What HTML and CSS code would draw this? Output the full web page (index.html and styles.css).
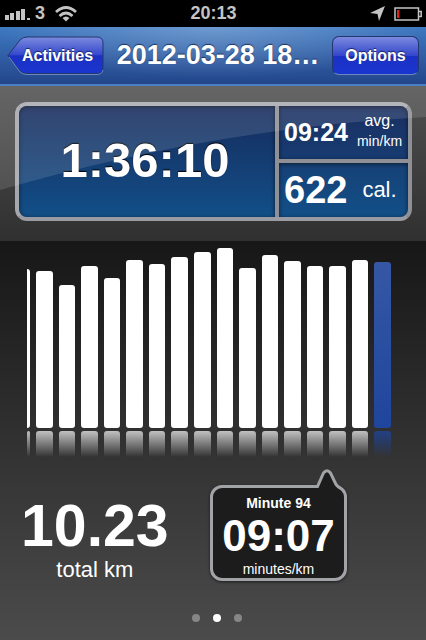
FILE: index.html
```
<!DOCTYPE html>
<html lang="en">

<head>
    <meta charset="UTF-8">
    <meta name="viewport" content="width=device-width, initial-scale=1.0">
    <title>Activity</title>
    <link rel="stylesheet" href="styles.css">
</head>

<body>
    <div class="status-bar">
        <div class="carrier">
            <svg width="25" height="12" viewBox="0 0 25 12" fill="#c4c4c4">
                <rect x="0" y="7" width="4" height="5" />
                <rect x="5" y="5" width="4" height="7" />
                <rect x="11" y="3" width="4" height="9" />
                <rect x="16" y="1" width="4" height="11" />
                <rect x="22" y="10" width="3" height="2" />
            </svg>
            <span>3</span>
            <svg class="wifi" width="22" height="16" viewBox="0 0 22 16" fill="none" stroke="#c4c4c4" stroke-width="2.8">
                <path d="M1 6 Q11 -3 21 6" />
                <path d="M4.500 10 Q11 4 17.500 10" />
                <path d="M11 15.500 L7.500 12 Q11 9 14.500 12 Z" fill="#c4c4c4" stroke="none" />
            </svg>
        </div>
        <span class="clock">20:13</span>
        <div class="indicators">
            <svg width="15" height="15" viewBox="0 0 15 15" fill="#c4c4c4">
                <path d="M15 0 L9 15 L7.500 8 L0 7 Z" />
            </svg>
            <svg width="28" height="14" viewBox="0 0 28 14" fill="none" stroke="#c4c4c4" stroke-width="1.500">
                <rect x="1" y="1" width="23.500" height="12" />
                <path d="M25 4.500 H27.200 V9.500 H25" />
                <rect x="3" y="3" width="2.500" height="8" fill="#d8261c" stroke="none" />
            </svg>
        </div>
    </div>

    <header class="nav-bar">
        <button class="back-btn" type="button">
            <svg viewBox="0 0 97 39" preserveAspectRatio="none">
                <defs>
                    <linearGradient id="backFill" x1="0" y1="0" x2="0" y2="1">
                        <stop offset="0" stop-color="#7b8ade" />
                        <stop offset="0.5" stop-color="#3447cc" />
                        <stop offset="0.51" stop-color="#1c31c4" />
                        <stop offset="1" stop-color="#1a35cf" />
                    </linearGradient>
                </defs>
                <path d="M1 19.500 L13 4 Q16 1 20 1 H90 Q96 1 96 7 V31 Q96 37.500 90 37.500 H20 Q16 37.500 13 35 Z" fill="url(#backFill)" stroke="#24366f" />
                <path d="M2 21 L13 36 Q16 38.500 20 38.500 H90 Q95 38.500 96 34" fill="none" stroke="#6c87bd" />
            </svg>
            <span>Activities</span>
        </button>
        <h1 class="title">2012-03-28 18…</h1>
        <button class="options-btn" type="button">Options</button>
    </header>

    <section class="summary">
        <div class="panel">
            <div class="cell duration">1:36:10</div>
            <div class="cell pace">
                <span class="value">09:24</span>
                <span class="unit">avg.<small>min/km</small></span>
            </div>
            <div class="cell calories">
                <span class="value">622</span>
                <span class="unit">cal.</span>
            </div>
        </div>
        <svg class="gloss" viewBox="0 0 426 155" preserveAspectRatio="none">
            <path d="M0 0 H426 V31 Q213 42 0 104 Z" fill="#fff" fill-opacity="0.12" />
        </svg>
    </section>

    <main>
        <div class="chart">
            <div class="bar partial" style="height: 159px"></div>
            <div class="bar" style="height: 157px"></div>
            <div class="bar" style="height: 143px"></div>
            <div class="bar" style="height: 162px"></div>
            <div class="bar" style="height: 150px"></div>
            <div class="bar" style="height: 168px"></div>
            <div class="bar" style="height: 164px"></div>
            <div class="bar" style="height: 171px"></div>
            <div class="bar" style="height: 176px"></div>
            <div class="bar" style="height: 180px"></div>
            <div class="bar" style="height: 160px"></div>
            <div class="bar" style="height: 173px"></div>
            <div class="bar" style="height: 167px"></div>
            <div class="bar" style="height: 162px"></div>
            <div class="bar" style="height: 162px"></div>
            <div class="bar" style="height: 168px"></div>
            <div class="bar selected" style="height: 166px"></div>
        </div>

        <div class="details">
            <div class="distance">
                <div class="distance-value">10.23</div>
                <div class="distance-label">total km</div>
            </div>
            <div class="bubble">
                <svg class="pointer" width="32" height="22" viewBox="0 0 32 22">
                    <path d="M4 19 L5 18 L12 4 Q15 0 18 4 L24 17 L29 22 H4 Z" fill="#1c1c1c" />
                    <path d="M2 17.500 H5.500 L11.500 4 Q15 -0.500 18.500 4 L24 15.500 Q26 18 29 19.500" fill="none" stroke="#a2a3a7" stroke-width="3" />
                </svg>
                <div class="bubble-title">Minute 94</div>
                <div class="bubble-value">09:07</div>
                <div class="bubble-unit">minutes/km</div>
            </div>
        </div>

        <div class="pager">
            <span class="dot"></span>
            <span class="dot active"></span>
            <span class="dot"></span>
        </div>
    </main>
</body>

</html>
```
FILE: styles.css
```
* {
    box-sizing: border-box;
}

body {
    margin: 0;
    min-height: 100vh;
    display: flex;
    flex-direction: column;
    background-color: #4b4b4b;
    color: white;
    font-family: "Liberation Sans", Arial, sans-serif;
}

/* status bar */
.status-bar {
    display: grid;
    grid-template-columns: 1fr auto 1fr;
    align-items: center;
    height: 27px;
    padding: 0 4px 0 5px;
    background-color: black;
    color: #c4c4c4;
    font-size: 18px;
    font-weight: bold;
}

.carrier,
.indicators {
    display: flex;
    align-items: center;
}

.carrier {
    gap: 5px;
}

.wifi {
    margin-left: 5px;
}

.indicators {
    justify-content: flex-end;
    gap: 9px;
}

/* navigation */
.nav-bar {
    display: flex;
    align-items: center;
    gap: 8px;
    height: 59px;
    padding: 0 7px;
    border-bottom: 2px solid #4a7fc4;
    background: radial-gradient(ellipse 50% 90% at 50% 0, rgba(255, 255, 255, 0.25), transparent), linear-gradient(#3e79c1, #23458a);
}

.title {
    flex: 1;
    margin: 0;
    padding-bottom: 2px;
    font-size: 27px;
    line-height: 32px;
    text-align: center;
    white-space: nowrap;
    text-shadow: 0 -1px 1px #1c3260;
}

.back-btn,
.options-btn {
    height: 39px;
    padding: 0;
    color: white;
    font-family: inherit;
    font-size: 16px;
    font-weight: bold;
    text-shadow: 0 -1px 1px #172260;
}

.back-btn {
    position: relative;
    width: 97px;
    padding-left: 4px;
    border: none;
    background: none;
}

.back-btn svg {
    position: absolute;
    top: 0;
    left: 0;
    width: 100%;
    height: 100%;
}

.back-btn span {
    position: relative;
}

.options-btn {
    width: 87px;
    border: 1px solid #24366f;
    border-bottom-color: #6c87bd;
    border-radius: 7px;
    background: linear-gradient(#7b8ade, #3447cc 50%, #1c31c4 51%, #1a35cf);
}

/* summary panel */
.summary {
    position: relative;
    padding: 16px 14px 20px 15px;
    background: linear-gradient(#505050, #303030);
}

.panel {
    display: grid;
    grid-template-columns: 1fr 129px;
    grid-template-rows: 53px 54px;
    gap: 4px;
    border: 4px solid;
    border-color: #a8abb0 #8e9095 #9a9ba3 #a6a7ad;
    border-radius: 12px;
    background-color: #8e9095;
}

.cell {
    display: flex;
    align-items: center;
    box-shadow: inset 0 1px 4px rgba(0, 0, 0, 0.6);
}

.cell .value,
.cell .unit {
    position: relative;
    z-index: 1;
}

.duration {
    grid-row: span 2;
    justify-content: center;
    padding: 0 4px 4px 0;
    border-radius: 8px 0 0 8px;
    background: linear-gradient(#162b5c, #124f88);
    font-size: 49px;
    font-weight: bold;
    text-shadow: 0 -1px 1px black;
}

.pace,
.calories {
    padding-left: 5px;
}

.pace {
    border-radius: 0 8px 0 0;
    background: linear-gradient(#1b2f61, #173c72);
}

.calories {
    border-radius: 0 0 8px 0;
    background: linear-gradient(#164176, #124f88);
}

.value {
    width: 67px;
    font-weight: bold;
}

.unit {
    flex: 1;
    text-align: center;
}

.pace .value {
    font-size: 25px;
}

.pace .unit {
    padding-bottom: 4px;
    font-size: 16px;
    line-height: 20px;
}

.pace small {
    display: block;
    font-size: 14px;
}

.calories .value {
    font-size: 38px;
}

.calories .unit {
    font-size: 22px;
}

.gloss {
    position: absolute;
    top: 0;
    left: 0;
    width: 100%;
    height: 100%;
}

/* pace chart */
main {
    flex: 1;
    display: flex;
    flex-direction: column;
    background: linear-gradient(#171717, #4b4b4b);
}

.chart {
    display: flex;
    align-items: flex-end;
    gap: 6px;
    height: 187px;
    padding: 0 35px 0 27px;
}

.bar {
    position: relative;
    flex: 1;
    border-radius: 3px;
    background: white;
}

.bar::after {
    content: "";
    position: absolute;
    top: 100%;
    left: 0;
    width: 100%;
    height: 26px;
    margin-top: 3px;
    border-radius: 3px 3px 0 0;
    background: linear-gradient(rgba(255, 255, 255, 0.7), transparent);
}

.partial {
    flex: none;
    width: 3px;
    border-radius: 0 3px 3px 0;
}

.selected {
    background: linear-gradient(#3557a5, #1f459c);
}

.selected::after {
    background: linear-gradient(rgba(31, 69, 156, 0.8), transparent);
}

/* distance and selected minute */
.details {
    display: flex;
    justify-content: space-between;
    align-items: flex-start;
    padding: 57px 79px 0 21px;
}

.distance {
    padding-top: 11px;
    text-align: center;
}

.distance-value {
    font-size: 59px;
    font-weight: bold;
    line-height: 60px;
}

.distance-label {
    font-size: 22px;
    line-height: 28px;
}

.bubble {
    position: relative;
    width: 137px;
    padding: 7px 0 1px;
    border: 3px solid #a2a3a7;
    border-radius: 12px;
    background-color: #1c1c1c;
    box-shadow: 0 1px 3px rgba(0, 0, 0, 0.6);
    text-align: center;
}

.pointer {
    position: absolute;
    top: -19px;
    right: 0;
}

.bubble-title,
.bubble-unit {
    font-size: 14px;
    line-height: 16px;
}

.bubble-title {
    font-weight: bold;
}

.bubble-value {
    font-size: 44px;
    font-weight: bold;
    line-height: 50px;
}

.pager {
    display: flex;
    justify-content: center;
    gap: 13px;
    margin-top: auto;
    padding: 0 0 18px 8px;
}

.dot {
    width: 8px;
    height: 8px;
    border-radius: 50%;
    background-color: #868686;
}

.dot.active {
    background-color: white;
}
```
